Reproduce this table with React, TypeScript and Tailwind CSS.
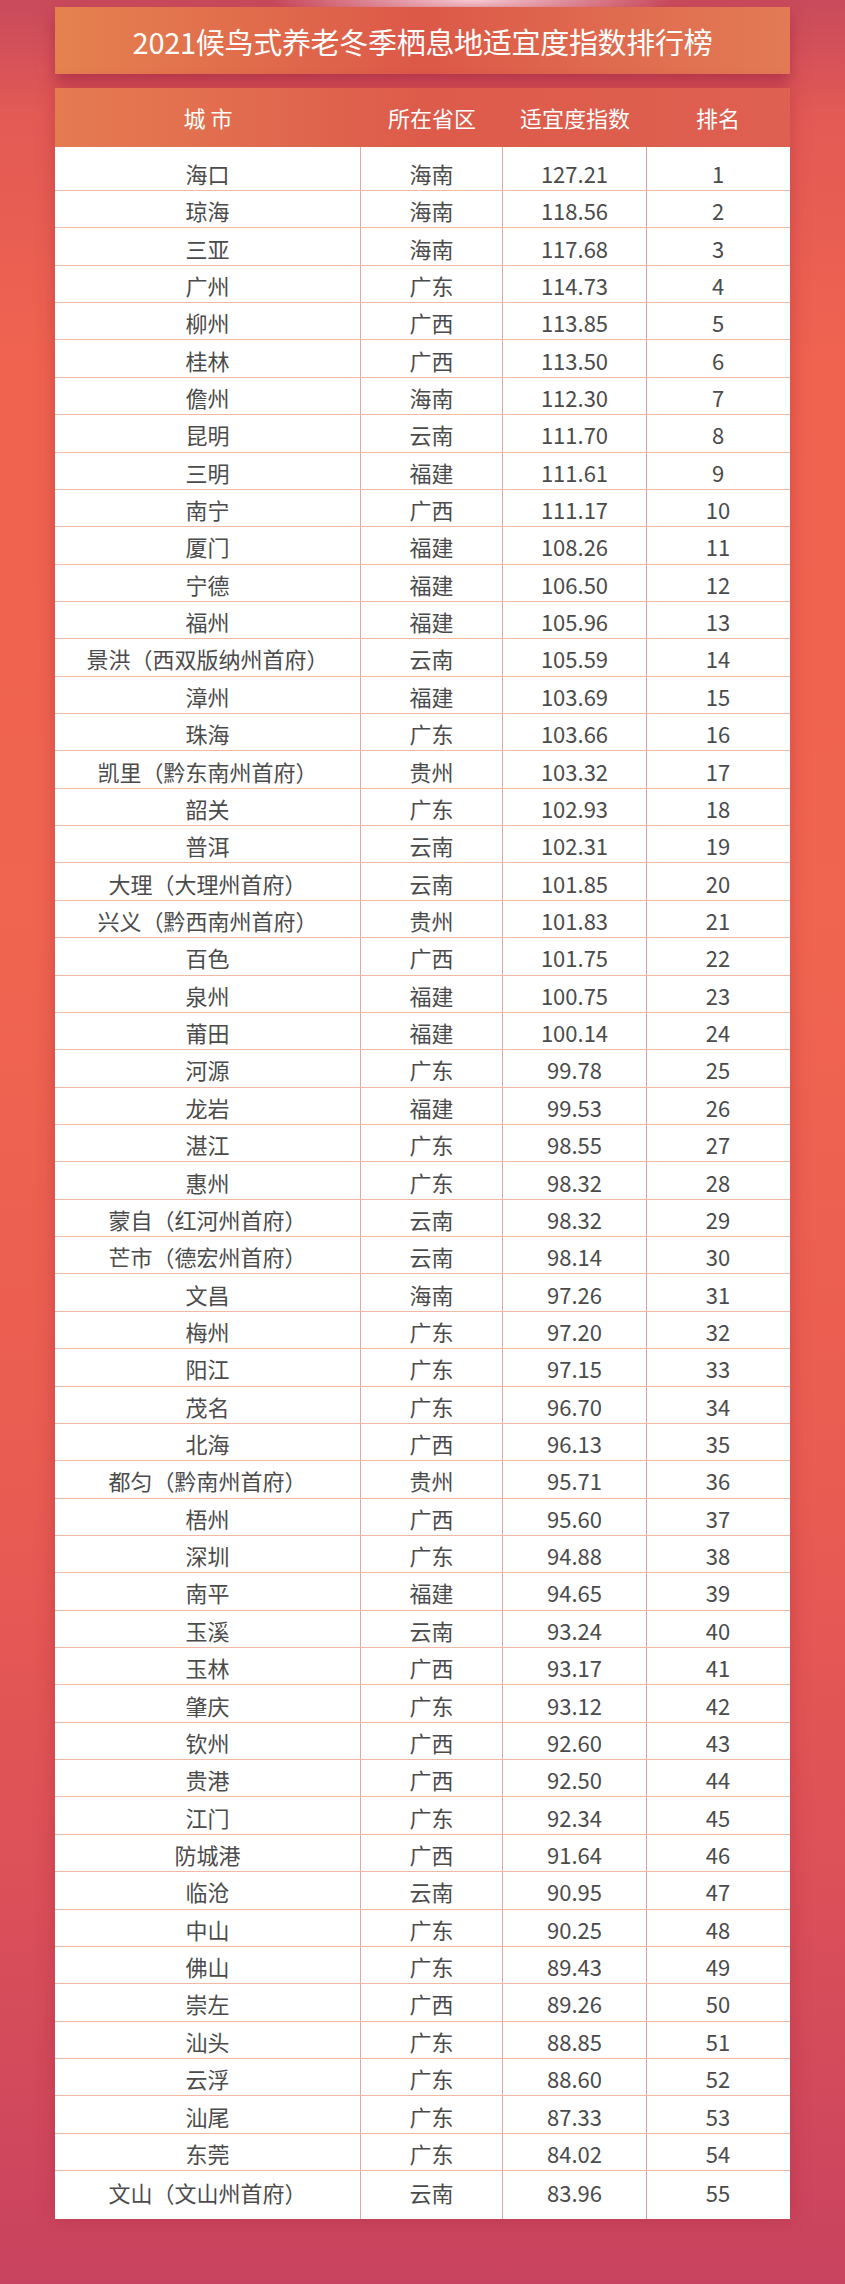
const rows: [string, string, string][] = [
  ["海口", "海南", "127.21"],
  ["琼海", "海南", "118.56"],
  ["三亚", "海南", "117.68"],
  ["广州", "广东", "114.73"],
  ["柳州", "广西", "113.85"],
  ["桂林", "广西", "113.50"],
  ["儋州", "海南", "112.30"],
  ["昆明", "云南", "111.70"],
  ["三明", "福建", "111.61"],
  ["南宁", "广西", "111.17"],
  ["厦门", "福建", "108.26"],
  ["宁德", "福建", "106.50"],
  ["福州", "福建", "105.96"],
  ["景洪（西双版纳州首府）", "云南", "105.59"],
  ["漳州", "福建", "103.69"],
  ["珠海", "广东", "103.66"],
  ["凯里（黔东南州首府）", "贵州", "103.32"],
  ["韶关", "广东", "102.93"],
  ["普洱", "云南", "102.31"],
  ["大理（大理州首府）", "云南", "101.85"],
  ["兴义（黔西南州首府）", "贵州", "101.83"],
  ["百色", "广西", "101.75"],
  ["泉州", "福建", "100.75"],
  ["莆田", "福建", "100.14"],
  ["河源", "广东", "99.78"],
  ["龙岩", "福建", "99.53"],
  ["湛江", "广东", "98.55"],
  ["惠州", "广东", "98.32"],
  ["蒙自（红河州首府）", "云南", "98.32"],
  ["芒市（德宏州首府）", "云南", "98.14"],
  ["文昌", "海南", "97.26"],
  ["梅州", "广东", "97.20"],
  ["阳江", "广东", "97.15"],
  ["茂名", "广东", "96.70"],
  ["北海", "广西", "96.13"],
  ["都匀（黔南州首府）", "贵州", "95.71"],
  ["梧州", "广西", "95.60"],
  ["深圳", "广东", "94.88"],
  ["南平", "福建", "94.65"],
  ["玉溪", "云南", "93.24"],
  ["玉林", "广西", "93.17"],
  ["肇庆", "广东", "93.12"],
  ["钦州", "广西", "92.60"],
  ["贵港", "广西", "92.50"],
  ["江门", "广东", "92.34"],
  ["防城港", "广西", "91.64"],
  ["临沧", "云南", "90.95"],
  ["中山", "广东", "90.25"],
  ["佛山", "广东", "89.43"],
  ["崇左", "广西", "89.26"],
  ["汕头", "广东", "88.85"],
  ["云浮", "广东", "88.60"],
  ["汕尾", "广东", "87.33"],
  ["东莞", "广东", "84.02"],
  ["文山（文山州首府）", "云南", "83.96"],
];

export default function App() {
  const last = rows.length - 1;

  return (
    <div className="w-full h-[2284px] pt-[7px] font-['Noto_Sans_CJK_SC','Noto_Sans',sans-serif] bg-[radial-gradient(ellipse_200px_26px_at_56%_0%,rgba(255,225,232,0.85),rgba(255,225,232,0)),linear-gradient(to_bottom,#c84a5c_0%,#e35a55_5%,#ef634f_16%,#f0654f_40%,#e95c52_65%,#dc5058_82%,#c8435f_100%)]">
      {/* Title */}
      <div className="mx-[55px] h-[67px] flex items-center justify-center bg-gradient-to-r from-[#e5814f] via-[#dc5848] to-[#e27b55] shadow-[0_8px_14px_rgba(150,30,70,0.55)]">
        <h1 className="text-[29px] text-white font-normal tracking-[-0.3px] pt-[3px]">
          2021候鸟式养老冬季栖息地适宜度指数排行榜
        </h1>
      </div>

      {/* Table */}
      <div className="mx-[55px] mt-[14px] bg-white shadow-[0_0_18px_rgba(170,40,60,0.45)]">
        <div className="grid grid-cols-[306px_142px_144px_142px] h-[59px] bg-gradient-to-r from-[#e57b51] via-[#dd5b4b] to-[#de6050] text-white text-[22px]">
          <div className="flex items-center justify-center">城 市</div>
          <div className="flex items-center justify-center">所在省区</div>
          <div className="flex items-center justify-center">适宜度指数</div>
          <div className="flex items-center justify-center">排名</div>
        </div>

        {rows.map(([city, prov, score], i) => {
          // row line sits under the cells, so cells are 1px shorter than the row pitch
          const h = i === 0 ? "h-[43px] pt-[9px]" : i === last ? "h-[48px] pb-[6px]" : "h-[36.36px] pt-[2px]";
          const line = i === last ? "" : "border-b border-[#efb9a2]";
          return (
            <div
              key={i}
              className={`grid grid-cols-[306px_142px_144px_142px] text-[22px] text-[#4b4b4b] leading-none ${line}`}
            >
              <div className={`flex items-center justify-center border-r border-[#e6a89b] ${h}`}>{city}</div>
              <div className={`flex items-center justify-center border-r border-[#e6a89b] ${h}`}>{prov}</div>
              <div className={`flex items-center justify-center border-r border-[#dc9aa0] ${h}`}>{score}</div>
              <div className={`flex items-center justify-center ${h}`}>{i + 1}</div>
            </div>
          );
        })}
      </div>
    </div>
  );
}
